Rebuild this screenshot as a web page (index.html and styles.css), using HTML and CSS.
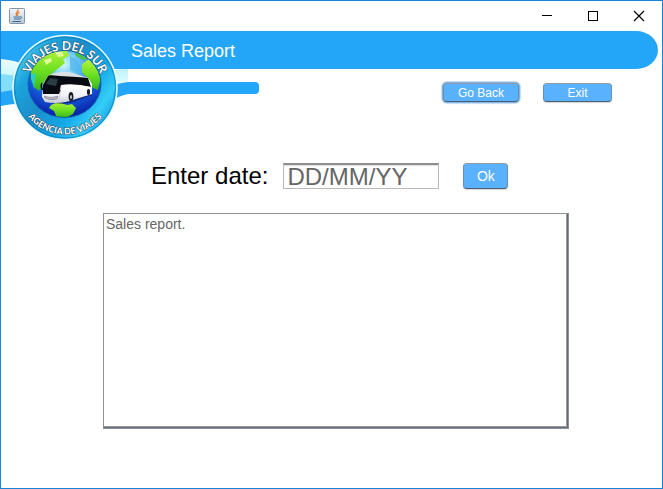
FILE: index.html
```html
<!DOCTYPE html>
<html lang="en">
<head>
<meta charset="utf-8">
<meta name="viewport" content="width=device-width, initial-scale=1">
<title>Sales Report</title>
<link rel="stylesheet" href="styles.css">
</head>
<body>
<div class="window">
  <div class="titlebar">
    <svg class="app-icon" width="16" height="16" viewBox="0 0 16 16" aria-hidden="true">
      <defs><linearGradient id="tile" x2="0" y2="1"><stop stop-color="#f4f7fa"/><stop offset="1" stop-color="#b9cad9"/></linearGradient></defs>
      <rect x=".5" y=".5" width="15" height="15" rx="1" fill="url(#tile)" stroke="#8494a5"/>
      <path d="M8.800 1.500C10 3.600 5.500 4.600 7.600 8M10.500 4.200C8 5.200 8.200 6 8.800 7.800" fill="none" stroke="#e8792b" stroke-width="1.300"/>
      <path d="M4.500 9h6.500M5 11h5.500M3.500 13.500h8.500M11 8.800c2.500-.5 2 2-.5 2.300" fill="none" stroke="#3f6c96"/>
    </svg>
    <div class="window-controls">
      <button type="button" class="window-button" aria-label="Minimize"><svg width="12" height="12" viewBox="0 0 12 12" shape-rendering="crispEdges"><path d="M1 5.500h10" stroke="#000"/></svg></button>
      <button type="button" class="window-button" aria-label="Maximize"><svg width="12" height="12" viewBox="0 0 12 12"><rect x="1.500" y="1.500" width="9" height="9" fill="none" stroke="#000"/></svg></button>
      <button type="button" class="window-button" aria-label="Close"><svg width="12" height="12" viewBox="0 0 12 12"><path d="M1 1l10 10M11 1L1 11" stroke="#000" stroke-width="1.200"/></svg></button>
    </div>
  </div>

  <header class="header">
    <svg class="logo" width="127" height="112" viewBox="1 31 127 112" role="img" aria-label="Viajes del Sur, agencia de viajes">
      <defs>
        <linearGradient id="wave" x2="0" y2="1"><stop stop-color="#effdff"/><stop offset=".5" stop-color="#c5f6fc"/><stop offset="1" stop-color="#8ee4fa"/></linearGradient>
        <linearGradient id="waveRight" x2="0" y2="1"><stop stop-color="#bdf3f8"/><stop offset="1" stop-color="#f4ffff"/></linearGradient>
        <linearGradient id="ring" x1="0" y1=".15" x2="1" y2=".85"><stop stop-color="#63dcf7"/><stop offset=".2" stop-color="#1ba4dc"/><stop offset=".42" stop-color="#1c8dcb"/><stop offset=".65" stop-color="#13a7e6"/><stop offset=".82" stop-color="#35cdf8"/><stop offset="1" stop-color="#0a8bd8"/></linearGradient>
        <radialGradient id="sea" cx=".48" cy=".2" r=".8"><stop stop-color="#d9faff"/><stop offset=".25" stop-color="#6cc8f5"/><stop offset=".6" stop-color="#1767e2"/><stop offset="1" stop-color="#0a1ca6"/></radialGradient>
        <linearGradient id="land" x2="0" y2="1"><stop stop-color="#b4f23a"/><stop offset=".5" stop-color="#6ee021"/><stop offset="1" stop-color="#35b51c"/></linearGradient>
        <linearGradient id="side" x2="0" y2="1"><stop stop-color="#fff"/><stop offset=".75" stop-color="#f2f3f8"/><stop offset="1" stop-color="#c6c9d4"/></linearGradient>
        <clipPath id="globe"><ellipse cx="64.500" cy="84" rx="36" ry="33"/></clipPath>
        <path id="arcTop" d="M27.500 87.500a37.500 37.500 0 0 1 75 0"/>
        <path id="arcBottom" d="M18 87.500a47 47 0 0 0 94 0"/>
      </defs>
      <path d="M1 31h127v38h-30L1 80z" fill="#24a6f8"/>
      <path d="M1 59Q16 60 30 67V96Q16 91 1 92z" fill="url(#wave)"/>
      <path d="M1 74Q14 75 24 78V93Q12 90 1 92z" fill="#82defa"/>
      <path d="M1 92Q16 89 32 88V104Q14 103 1 106z" fill="#24a6f8"/>
      <path d="M98 74Q114 69 128 69V82Q112 85 98 92z" fill="url(#waveRight)"/>
      <path d="M98 90Q114 84 128 82V94Q119 96 106 103z" fill="#24a6f8"/>
      <circle cx="65" cy="87.500" r="52" fill="url(#ring)" stroke="#e9fbff" stroke-width="1.500"/>
      <circle cx="65" cy="87.500" r="50.500" fill="none" stroke="#0878b7" stroke-width=".7"/>
      <ellipse cx="64.500" cy="84" rx="36.500" ry="33.500" fill="url(#sea)" stroke="#1265ad"/>
      <g clip-path="url(#globe)">
        <path d="M34 61L42 53 55 49 67 51 69 56 63 59 65 63 60 67 55 71 48 77 43 84 39 91 34 87 31 79 31 70z" fill="url(#land)"/>
        <path d="M44 60l7-2 1 3-6 4zM55 52l7 0 2 4-6 1z" fill="#e2fb9a"/>
        <path d="M74 51l8 2 6 6-5 1-7-4z" fill="#4cc04c"/>
        <path d="M82 64l7-5 7 6 5 12-3 13-7-3-3-8-6-7z" fill="url(#land)"/>
        <path d="M70 56l7 4 4 8-2 5-9-3z" fill="#4bb4ee" opacity=".7"/>
        <path d="M51 105l7-3 9 3 5-1 4 4-3 6-7 4-9 0-3-7-5-3z" fill="url(#land)"/>
        <path d="M31 75l5-2-2 16z" fill="#25d0c2"/>
      </g>
      <path d="M46 101Q58 106 74 102L92 95 91 90 73 92z" fill="#071554" opacity=".6"/>
      <path d="M43 84L48 76Q58 71 72 73L89 79 92 84V94L76 99Q60 105 45 102L42 97z" fill="url(#side)"/>
      <path d="M43 85L48 76Q57 71 69 73L88 78 91 87 77 85 63 86 59 94 43 94z" fill="#080c12"/>
      <path d="M49 75Q58 71 69 72L89 78 77 77 60 76z" fill="#dbe2e6"/>
      <path d="M46 84l4-6 8 1-2 7z" fill="#2a3d46"/>
      <path d="M61 85Q74 83 91 87V89L60 90z" fill="#fff"/>
      <path d="M44 96q7 3 14 0l-1 3q-6 2-12-1z" fill="#aeb3bf" stroke="#6d7280" stroke-width=".5"/>
      <path d="M61 86l-2 14" stroke="#b9bdc9" stroke-width=".6"/>
      <ellipse cx="71" cy="96.500" rx="2.400" ry="4.500" fill="#181b24"/><ellipse cx="88.500" cy="92" rx="1.600" ry="3" fill="#181b24"/>
      <ellipse cx="71" cy="97" rx="1" ry="2" fill="#c7cad2"/>
      <path d="M42 83q-2 4 1 7" fill="none" stroke="#05080c" stroke-width="1.500"/>
      <text class="logo-name"><textPath href="#arcTop" startOffset="50%">VIAJES DEL SUR</textPath></text>
      <text class="logo-caption"><textPath href="#arcBottom" startOffset="50%">AGENCIA DE VIAJES</textPath></text>
    </svg>
    <div class="header-body">
      <h1 class="banner">Sales Report</h1>
      <div class="toolbar">
        <div class="accent"></div>
        <nav class="actions">
          <button type="button" class="button button-wide button-focused">Go Back</button>
          <button type="button" class="button">Exit</button>
        </nav>
      </div>
    </div>
  </header>

  <main class="content">
    <form class="date-form">
      <label class="date-label" for="date">Enter date:</label>
      <input class="date-input" id="date" type="text" placeholder="DD/MM/YY">
      <button type="button" class="button button-ok">Ok</button>
    </form>
    <textarea class="report" aria-label="Sales report" placeholder="Sales report."></textarea>
  </main>
</div>
</body>
</html>
```
FILE: styles.css
```css
* { box-sizing: border-box; }

body {
  margin: 0;
  background: #fff;
  font-family: "Liberation Sans", Arial, sans-serif;
}

button, input, textarea { font-family: inherit; }

.window {
  display: flex;
  flex-direction: column;
  min-height: 100vh;
  border: 1px solid #1883d7;
}

.titlebar {
  display: flex;
  justify-content: space-between;
  align-items: center;
  height: 30px;
  padding-left: 8px;
}

.window-controls { display: flex; }

.window-button {
  display: grid;
  place-items: center;
  width: 46px;
  height: 30px;
  padding: 0;
  border: 0;
  background: none;
}

.header { display: flex; }

.logo { flex: none; }

.logo-name,
.logo-caption {
  font-family: Lato, "Liberation Sans", sans-serif;
  font-weight: 700;
  text-anchor: middle;
  fill: #fff;
  stroke: #2b4a60;
  stroke-width: 1px;
  paint-order: stroke;
}

.logo-name { font-size: 12px; }
.logo-caption { font-size: 9px; }

.header-body { flex: 1; }

.banner {
  height: 38px;
  margin: 0 4px 0 0;
  padding-left: 3px;
  border-radius: 0 22px 22px 0 / 0 19px 19px 0;
  background: #24a6f8;
  color: #fff;
  font-size: 18px;
  font-weight: 400;
  line-height: 40px;
}

.toolbar {
  display: flex;
  justify-content: space-between;
  align-items: flex-start;
  padding: 13px 50px 0 0;
}

.accent {
  width: 131px;
  height: 12px;
  border-radius: 0 4px 4px 0;
  background: #24a6f8;
}

.actions {
  display: flex;
  gap: 24px;
  padding-top: 1px;
}

.button {
  width: 69px;
  height: 19px;
  padding: 0;
  border: 1px solid #6d8fad;
  border-top-color: #8f9aa5;
  border-bottom-color: #4b6072;
  border-radius: 4px;
  background: #5ab2ff;
  box-shadow: 0 1px 1px #d4d4d4;
  color: #fff;
  font-size: 12px;
  line-height: 16px;
}

.button-wide { width: 76px; }

.button-focused { box-shadow: 0 0 0 1px #80b4e4, 0 0 1px 2px #c5dcf2; }

.content {
  display: flex;
  flex: 1;
  flex-direction: column;
  gap: 24px;
  padding: 20px 93px 59px 102px;
}

.date-form {
  display: flex;
  align-items: center;
  padding-left: 48px;
}

.date-label {
  margin-right: 15px;
  font-size: 24px;
  line-height: 26px;
}

.date-input {
  width: 156px;
  height: 26px;
  margin-right: 24px;
  padding: 0 3px;
  border: 1px solid #bababa;
  border-top: 2px solid #8e8e8e;
  background: #fff;
  box-shadow: inset 0 1px 1px #ddd;
  font-size: 24px;
}

.date-input::placeholder,
.report::placeholder {
  color: #666;
  opacity: 1;
}

.button-ok {
  width: 45px;
  height: 26px;
  font-size: 14px;
}

.report {
  flex: 1;
  width: 100%;
  padding: 2px;
  border: 1px solid #8d919d;
  background: #fff;
  box-shadow: inset -1px -1px #646973, inset -2px -2px #9a9ca3;
  font-size: 14px;
  line-height: 16px;
  resize: none;
}
```
